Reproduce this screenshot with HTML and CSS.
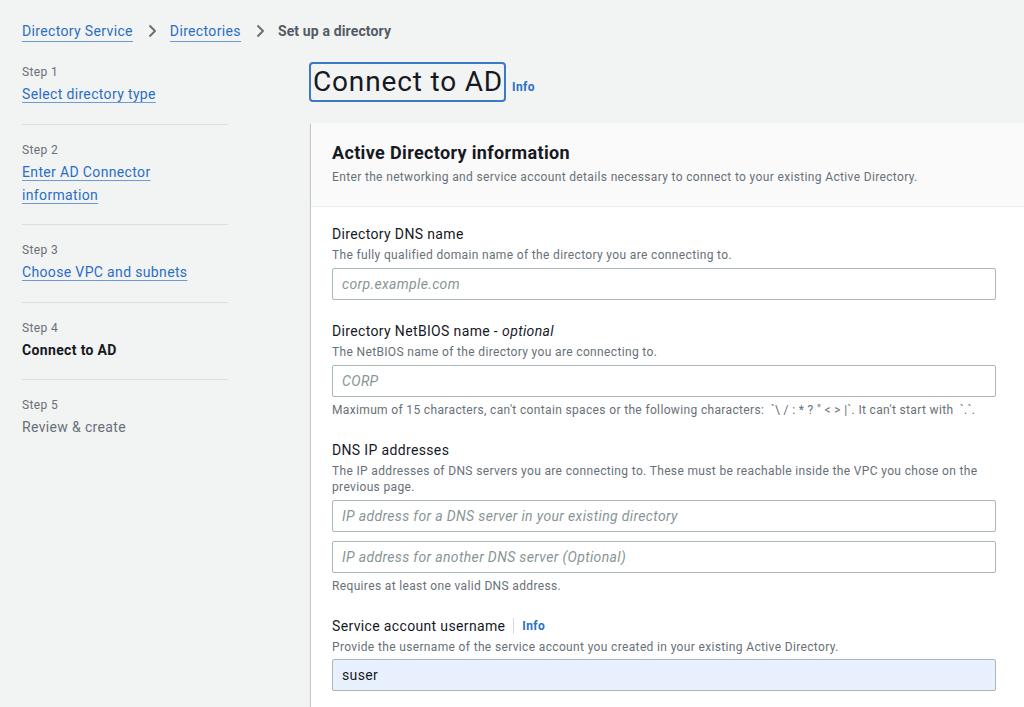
FILE: index.html
```html
<!DOCTYPE html>
<html lang="en">
<head>
<meta charset="utf-8">
<title>Connect to AD</title>
<link rel="stylesheet" href="styles.css">
</head>
<body>
<div class="page">
  <nav class="breadcrumbs">
    <a class="crumb-link" href="#">Directory Service</a>
    <svg class="chev" viewBox="0 0 16 16" width="16" height="16"><path d="M5.5 2.5 11 8l-5.5 5.5" fill="none" stroke="#687078" stroke-width="2" stroke-linejoin="round"/></svg>
    <a class="crumb-link" href="#">Directories</a>
    <svg class="chev" viewBox="0 0 16 16" width="16" height="16"><path d="M5.5 2.5 11 8l-5.5 5.5" fill="none" stroke="#687078" stroke-width="2" stroke-linejoin="round"/></svg>
    <span class="crumb-current">Set up a directory</span>
  </nav>

  <div class="layout">
    <ul class="steps">
      <li class="step">
        <div class="step-num">Step 1</div>
        <a class="step-link" href="#">Select directory type</a>
      </li>
      <li class="step">
        <div class="step-num">Step 2</div>
        <a class="step-link" href="#">Enter AD Connector information</a>
      </li>
      <li class="step">
        <div class="step-num">Step 3</div>
        <a class="step-link" href="#">Choose VPC and subnets</a>
      </li>
      <li class="step">
        <div class="step-num">Step 4</div>
        <span class="step-active">Connect to AD</span>
      </li>
      <li class="step">
        <div class="step-num">Step 5</div>
        <span class="step-disabled">Review &amp; create</span>
      </li>
    </ul>

    <main class="main">
      <div class="page-header">
        <h1 class="title">Connect to AD</h1>
        <a class="info" href="#">Info</a>
      </div>

      <section class="panel">
        <header class="panel-header">
          <h2 class="panel-title">Active Directory information</h2>
          <p class="panel-desc">Enter the networking and service account details necessary to connect to your existing Active Directory.</p>
        </header>
        <div class="panel-body">
          <div class="field">
            <div class="label">Directory DNS name</div>
            <div class="desc">The fully qualified domain name of the directory you are connecting to.</div>
            <input class="input" type="text" placeholder="corp.example.com">
          </div>
          <div class="field">
            <div class="label">Directory NetBIOS name - <i>optional</i></div>
            <div class="desc">The NetBIOS name of the directory you are connecting to.</div>
            <input class="input" type="text" placeholder="CORP">
            <div class="constraint">Maximum of 15 characters, can't contain spaces or the following characters: &nbsp;`\ / : * ? " &lt; &gt; |`. It can't start with &nbsp;`.`.</div>
          </div>
          <div class="field">
            <div class="label">DNS IP addresses</div>
            <div class="desc">The IP addresses of DNS servers you are connecting to. These must be reachable inside the VPC you chose on the previous page.</div>
            <input class="input" type="text" placeholder="IP address for a DNS server in your existing directory">
            <input class="input input-second" type="text" placeholder="IP address for another DNS server (Optional)">
            <div class="constraint">Requires at least one valid DNS address.</div>
          </div>
          <div class="field">
            <div class="label">Service account username <span class="divider"></span><a class="info info-inline" href="#">Info</a></div>
            <div class="desc">Provide the username of the service account you created in your existing Active Directory.</div>
            <input class="input input-filled" type="text" value="suser">
          </div>
        </div>
      </section>
    </main>
  </div>
</div>
</body>
</html>
```

FILE: styles.css
```css
* { box-sizing: border-box; }

html, body {
  margin: 0;
  padding: 0;
  background: #f2f3f3;
  overflow: hidden;
  height: 707px;
}

body {
  font-family: Roboto, "Liberation Sans", sans-serif;
  color: #16191f;
  font-size: 14px;
  letter-spacing: 0.025em;
}

.page {
  padding: 20px 0 0 22px;
}

a { text-decoration: none; }

.breadcrumbs {
  display: flex;
  align-items: center;
  height: 22px;
  line-height: 22px;
}

.crumb-link {
  color: #2a6fc4;
  border-bottom: 1px solid #6d9bd8;
  line-height: 19px;
  margin-top: 1px;
}

.chev {
  margin: 0 10px 0 11px;
}

.crumb-current {
  color: #545b64;
  font-weight: 700;
  letter-spacing: 0.01em;
}

.layout {
  display: flex;
  margin-top: 20px;
}

.steps {
  list-style: none;
  margin: 2px 0 0;
  padding: 0;
  width: 206px;
  flex: none;
}

.step {
  padding: 17px 0 17.5px;
  border-bottom: 1px solid #dcdfdf;
  font-size: 14px;
  line-height: 23px;
}
.step:first-child { padding-top: 0; }
.step:last-child { border-bottom: none; }

.step-num {
  font-size: 12px;
  line-height: 16px;
  color: #687078;
  margin-bottom: 3px;
}

.step-link {
  color: #2a6fc4;
  text-decoration: underline;
  text-decoration-color: #6d9bd8;
  text-underline-offset: 3px;
}

.step-active {
  font-weight: 700;
  color: #16191f;
}

.step-disabled {
  color: #687078;
}

.main {
  margin-left: 83px;
  width: 760px;
  flex: none;
}

.page-header {
  display: flex;
  align-items: baseline;
}

.title {
  margin: 0 0 0 -2px;
  font-size: 28px;
  font-weight: 400;
  line-height: 36px;
  letter-spacing: 0.03em;
  padding: 0 1px 0 2px;
  border: 2px solid #3b78c6;
  border-radius: 4px;
  color: #16191f;
}

.info {
  color: #2a6fc4;
  font-size: 12px;
  font-weight: 700;
  margin-left: 6px;
}

.panel {
  margin-top: 21px;
  background: #fff;
  box-shadow: 0 1px 1px 0 rgba(0, 28, 36, 0.3), 1px 1px 1px 0 rgba(0, 28, 36, 0.15), -1px 1px 1px 0 rgba(0, 28, 36, 0.15);
}

.panel-header {
  background: #fafafa;
  border-bottom: 1px solid #eaeded;
  padding: 19px 21px 21px;
}

.panel-title {
  margin: 0;
  font-size: 18px;
  line-height: 22px;
  font-weight: 700;
  color: #16191f;
}

.panel-desc {
  margin: 5px 0 0;
  font-size: 12px;
  line-height: 16px;
  color: #687078;
}

.panel-body {
  padding: 16px 21px 30px;
}

.field {
  width: 664px;
  margin-bottom: 21px;
}
.field:first-child { margin-bottom: 20px; }

.label {
  display: flex;
  align-items: center;
  font-size: 14px;
  line-height: 22px;
  color: #16191f;
}
.label i { margin-left: 4px; }

.divider {
  display: inline-block;
  width: 1px;
  height: 16px;
  background: #d5dbdb;
  margin: 0 8px 0 8px;
}

.info-inline { margin-left: 0; }

.desc {
  margin-top: 2px;
  font-size: 12px;
  line-height: 16px;
  color: #687078;
}

.input {
  display: block;
  width: 664px;
  height: 32px;
  margin-top: 5px;
  padding: 0 9px;
  border: 1px solid #aab7b8;
  border-radius: 2px;
  background: #fff;
  font-family: inherit;
  font-size: 14px;
  letter-spacing: 0.025em;
  color: #16191f;
  outline: none;
}

.input::placeholder {
  color: #879596;
  font-style: italic;
}

.input-second { margin-top: 9px; }

.input-filled {
  background: #e8f0fe;
  margin-top: 4px;
}

.constraint {
  margin-top: 5px;
  font-size: 12px;
  line-height: 16px;
  color: #687078;
}
```
